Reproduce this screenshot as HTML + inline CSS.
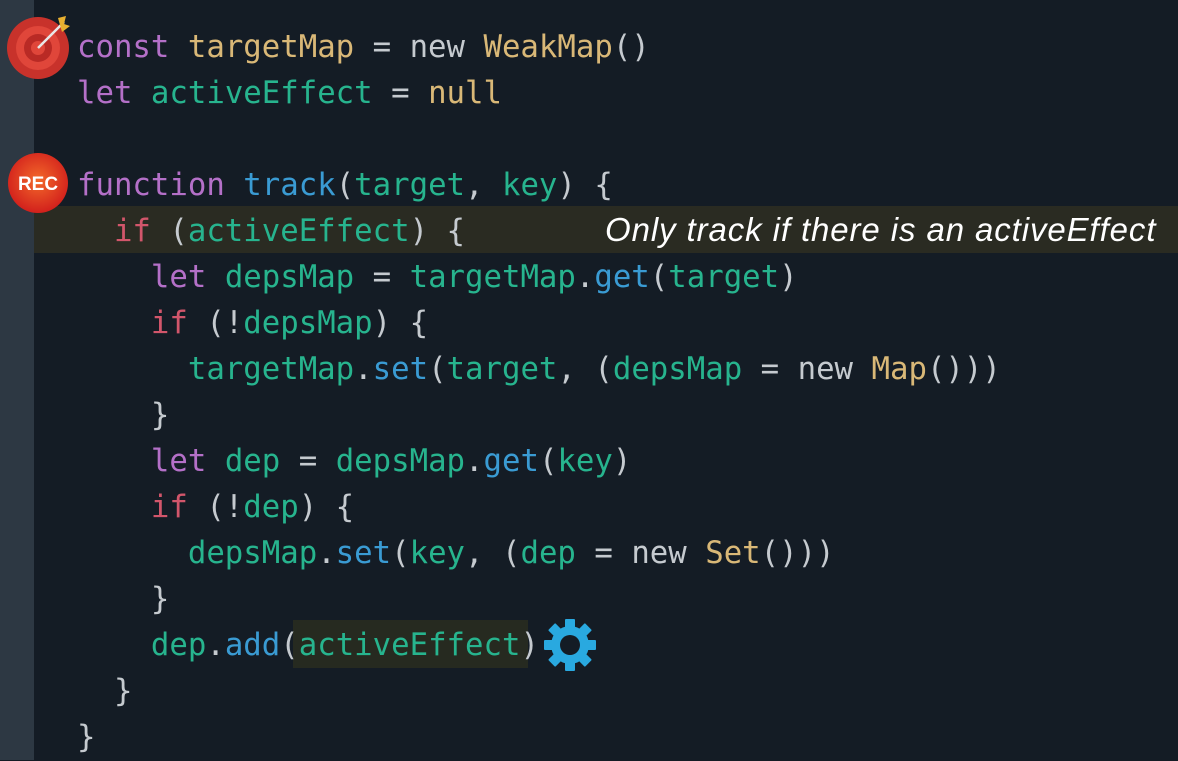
<!DOCTYPE html>
<html><head><style>
body{margin:0;width:1178px;height:760px;background:#141c25;overflow:hidden;position:relative;font-family:"DejaVu Sans Mono",monospace;}
.side{position:absolute;left:0;top:0;width:34px;height:760px;background:#2d3843;}
.band{position:absolute;left:34px;top:206px;width:1144px;height:47px;background:#2a2b22;}
.hl{position:absolute;left:293px;top:620px;width:235px;height:48px;background:#262a20;}
.code{position:absolute;left:77px;top:25px;font-size:30.7px;line-height:46px;color:#c5cacf;white-space:pre;}
.k{color:#b470c8}.y{color:#d9b877}.g{color:#27b48e}.b{color:#3a9bd3}.r{color:#d2566b}
.cm{position:absolute;left:605px;top:207px;font:italic 33px "Liberation Sans",sans-serif;color:#fff;line-height:46px;letter-spacing:0.9px;white-space:nowrap;}
</style></head><body>
<div class="side"></div>
<div class="band"></div>
<div class="hl"></div>
<div class="code"><span class="k">const</span> <span class="y">targetMap</span> = new <span class="y">WeakMap</span>()
<span class="k">let</span> <span class="g">activeEffect</span> = <span class="y">null</span>

<span class="k">function</span> <span class="b">track</span>(<span class="g">target</span>, <span class="g">key</span>) {
  <span class="r">if</span> (<span class="g">activeEffect</span>) {
    <span class="k">let</span> <span class="g">depsMap</span> = <span class="g">targetMap</span>.<span class="b">get</span>(<span class="g">target</span>)
    <span class="r">if</span> (!<span class="g">depsMap</span>) {
      <span class="g">targetMap</span>.<span class="b">set</span>(<span class="g">target</span>, (<span class="g">depsMap</span> = new <span class="y">Map</span>()))
    }
    <span class="k">let</span> <span class="g">dep</span> = <span class="g">depsMap</span>.<span class="b">get</span>(<span class="g">key</span>)
    <span class="r">if</span> (!<span class="g">dep</span>) {
      <span class="g">depsMap</span>.<span class="b">set</span>(<span class="g">key</span>, (<span class="g">dep</span> = new <span class="y">Set</span>()))
    }
    <span class="g">dep</span>.<span class="b">add</span>(<span class="g">activeEffect</span>)
  }
}</div>
<div class="cm">Only track if there is an activeEffect</div>
<svg style="position:absolute;left:6px;top:14px" width="64" height="66" viewBox="0 0 64 66">
<circle cx="32" cy="34" r="31" fill="#c8322b"/>
<circle cx="32" cy="34" r="22" fill="#e0463a"/>
<circle cx="32" cy="34" r="14" fill="#b92a25"/>
<circle cx="32" cy="34" r="7" fill="#e0463a"/>
<line x1="32" y1="34" x2="58" y2="8" stroke="#e8e8e8" stroke-width="2.5"/>
<path d="M52 4 L60 2 L58 10 L64 12 L56 18 Z" fill="#e8b030"/>
</svg>
<svg style="position:absolute;left:7px;top:152px" width="62" height="62" viewBox="0 0 62 62">
<defs><radialGradient id="rg" cx="50%" cy="45%" r="55%"><stop offset="0" stop-color="#f3692a"/><stop offset="1" stop-color="#d2201c"/></radialGradient></defs>
<circle cx="31" cy="31" r="30" fill="url(#rg)"/>
<text x="31" y="38" text-anchor="middle" font-family="Liberation Sans,sans-serif" font-weight="bold" font-size="19" fill="#fff">REC</text>
</svg>
<svg style="position:absolute;left:543px;top:618px" width="54" height="54" viewBox="-27 -27 54 54">
<g fill="#29a9e0">
<circle r="19"/>
<g id="t"><rect x="-5" y="-26" width="10" height="10" rx="1"/></g>
<use href="#t" transform="rotate(45)"/><use href="#t" transform="rotate(90)"/><use href="#t" transform="rotate(135)"/>
<use href="#t" transform="rotate(180)"/><use href="#t" transform="rotate(225)"/><use href="#t" transform="rotate(270)"/><use href="#t" transform="rotate(315)"/>
</g>
<circle r="10" fill="#141c25"/>
</svg>
</body></html>
